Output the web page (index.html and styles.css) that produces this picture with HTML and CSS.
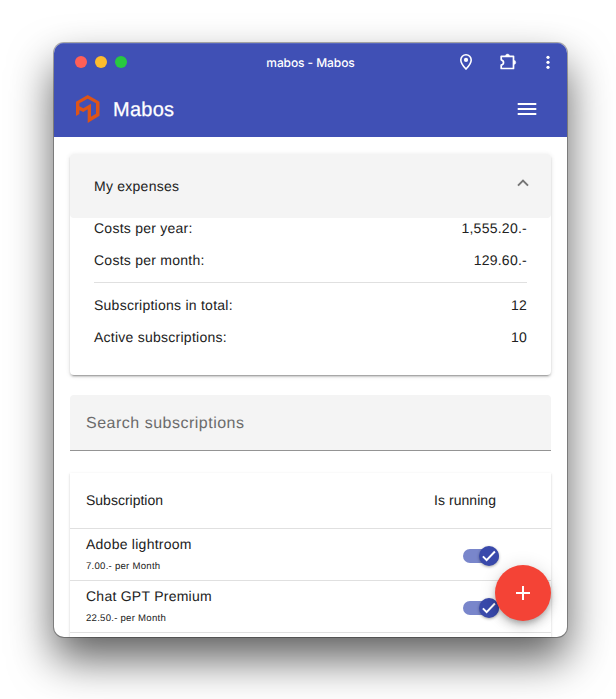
FILE: index.html
```html
<!DOCTYPE html>
<html lang="en">
<head>
<meta charset="utf-8">
<title>mabos - Mabos</title>
<link rel="stylesheet" href="styles.css">
</head>
<body>
<div class="window">
  <div class="titlebar">
    <div class="lights"><i class="light red"></i><i class="light yellow"></i><i class="light green"></i></div>
    <div class="window-title">mabos - Mabos</div>
    <div class="window-actions">
      <svg class="pin" width="18" height="20" viewBox="0 0 18 20"><path d="M9 2.700a5.200 5.200 0 0 0-5.200 5.200C3.800 11.500 9 17 9 17s5.200-5.500 5.200-9.100A5.200 5.200 0 0 0 9 2.700z" fill="none" stroke="#fff" stroke-width="1.600"/><circle cx="9" cy="7.900" r="2.100" fill="#fff"/></svg>
      <svg class="puzzle" width="20" height="20" viewBox="0 0 20 20"><path d="M3.200 4.300h12.300v12.200H3.200v-3.400c3.100-.7 3.100-4.600 0-5.300z" fill="none" stroke="#fff" stroke-width="1.700" stroke-linejoin="round"/><path d="M7.500 4a2 2 0 0 1 4 0zM15.700 8.300a2 2 0 0 1 0 4.200z" fill="#fff" stroke="#fff" stroke-width=".4"/></svg>
      <svg class="dots" width="6" height="20" viewBox="0 0 6 20" fill="#fff"><circle cx="3" cy="5.300" r="1.600"/><circle cx="3" cy="10.300" r="1.600"/><circle cx="3" cy="15.300" r="1.600"/></svg>
    </div>
  </div>
  <header class="toolbar">
    <svg class="logo" width="24" height="30" viewBox="0 0 24 30"><path fill="#dd5417" fill-rule="evenodd" d="M11.700 1 23.500 7.700V21.700L11.700 29V15.300L7.300 18 3.400 16.300V20L0 22V7.700zM3.400 9.300v3l3.900 2L15 9.700v13l5-3V9.300l-8.300-4.600z"/></svg>
    <h1>Mabos</h1>
    <svg class="menu" width="20" height="14" viewBox="0 0 20 14" fill="#fff"><path d="M.7 1h18.600v2H.7zM.7 6h18.600v2H.7zM.7 11h18.600v2H.7z"/></svg>
  </header>
  <main>
    <section class="panel">
      <div class="panel-head"><span>My expenses</span><svg width="12" height="8" viewBox="0 0 12 8"><path d="m1 6.600 5-5 5 5" fill="none" stroke="#757575" stroke-width="2"/></svg></div>
      <dl class="summary">
        <div><dt>Costs per year:</dt><dd>1,555.20.-</dd></div>
        <div><dt>Costs per month:</dt><dd>129.60.-</dd></div>
        <hr>
        <div><dt>Subscriptions in total:</dt><dd>12</dd></div>
        <div><dt>Active subscriptions:</dt><dd>10</dd></div>
      </dl>
    </section>
    <div class="search">Search subscriptions</div>
    <section class="table">
      <div class="row head"><span>Subscription</span><span class="running">Is running</span></div>
      <div class="row"><div class="name">Adobe lightroom<small>7.00.- per Month</small></div>
        <div class="switch"><span class="knob"><svg width="16" height="14" viewBox="0 0 16 14"><path d="m1.900 7.400 3.700 3.700 8.300-8.600" fill="none" stroke="#fff" stroke-width="2"/></svg></span></div></div>
      <div class="row"><div class="name">Chat GPT Premium<small>22.50.- per Month</small></div>
        <div class="switch"><span class="knob"><svg width="16" height="14" viewBox="0 0 16 14"><path d="m1.900 7.400 3.700 3.700 8.300-8.600" fill="none" stroke="#fff" stroke-width="2"/></svg></span></div></div>
      <div class="row"></div>
    </section>
  </main>
  <div class="fab"><svg width="16" height="16" viewBox="0 0 16 16"><path d="M8 1v14M1 8h14" stroke="#fff" stroke-width="2"/></svg></div>
</div>
</body>
</html>
```
FILE: styles.css
```css
* { box-sizing: border-box; }
body {
  margin: 0;
  width: 616px;
  height: 699px;
  padding: 43px 49px 0 54px;
  overflow: hidden;
  background: #fff;
  font-family: "Liberation Sans", Arial, sans-serif;
  font-size: 14px;
  letter-spacing: .25px;
  color: #212121;
  text-rendering: geometricPrecision;
}
svg { display: block; flex: none; }
.window {
  position: relative;
  width: 513px;
  height: 594px;
  overflow: hidden;
  border-radius: 10px;
  background: #fff;
  box-shadow: 0 0 0 1px rgba(0,0,0,.3), 0 22px 44px rgba(0,0,0,.63);
}
.titlebar {
  display: grid;
  grid-template-columns: 1fr auto 1fr;
  align-items: center;
  height: 38px;
  padding: 0 16px 0 21px;
  background: #4050b5;
  box-shadow: inset 0 1px #5867be;
  color: #fff;
}
.lights { display: flex; gap: 8px; }
.light { width: 12px; height: 12px; border-radius: 50%; }
.red { background: #ff5f57; }
.yellow { background: #febc2e; }
.green { background: #28c840; }
.window-title { margin-right: 5px; font: 500 12px Inter, sans-serif; letter-spacing: -.08px; }
.window-actions { display: flex; justify-content: flex-end; align-items: center; }
.puzzle { margin: 0 27px 0 23px; }
.toolbar {
  display: flex;
  align-items: center;
  height: 56px;
  padding: 0 30px 0 22px;
  background: #4050b5;
  color: #fff;
}
.toolbar h1 { flex: 1; margin: 2px 0 0 13px; font-size: 20px; font-weight: 400; -webkit-text-stroke: .25px #fff; }
main { padding: 17px 16px 0; }
.panel {
  height: 221px;
  border-radius: 4px;
  background: #fff;
  box-shadow: 0 3px 1px -2px rgba(0,0,0,.2), 0 2px 2px rgba(0,0,0,.14), 0 1px 5px rgba(0,0,0,.12);
}
.panel-head {
  display: flex;
  justify-content: space-between;
  align-items: center;
  height: 64px;
  padding: 0 22px 0 24px;
  border-radius: 4px;
  background: #f4f4f4;
}
.panel-head svg { margin-top: -7px; }
.summary { margin: -6px 24px 0; }
.summary div { display: flex; justify-content: space-between; align-items: center; height: 32px; }
.summary dd { margin: 0; }
.summary hr { height: 1px; margin: 6px 0; border: 0; background: #e0e0e0; }
.search {
  height: 56px;
  margin: 20px 0 22px;
  padding: 1px 16px 0;
  border-bottom: 1px solid #949494;
  border-radius: 4px 4px 0 0;
  background: #f4f4f4;
  color: #6b6b6b;
  font-size: 16px;
  line-height: 56px;
  letter-spacing: .5px;
}
.table { box-shadow: 0 2px 1px -1px rgba(0,0,0,.2), 0 1px 1px rgba(0,0,0,.14), 0 1px 3px rgba(0,0,0,.12); }
.row {
  display: flex;
  justify-content: space-between;
  align-items: center;
  height: 52px;
  padding: 0 52px 0 16px;
  border-bottom: 1px solid #e0e0e0;
}
.head { height: 56px; padding: 0 55px 2px 16px; letter-spacing: 0; }
.running { letter-spacing: .05px; }
.name { line-height: 20px; }
.name small { display: block; margin: 4px 0 -1px; font-size: 9.6px; line-height: 18px; }
.switch { display: flex; align-items: center; justify-content: flex-end; width: 36px; height: 14px; margin-top: 3px; border-radius: 7px; background: #7986cb; }
.knob {
  display: flex;
  align-items: center;
  justify-content: center;
  flex: none;
  width: 20px;
  height: 20px;
  border-radius: 50%;
  background: #3949ab;
  box-shadow: 0 1px 3px rgba(0,0,0,.35);
}
.fab {
  position: absolute;
  right: 16px;
  bottom: 16px;
  display: flex;
  align-items: center;
  justify-content: center;
  width: 56px;
  height: 56px;
  border-radius: 50%;
  background: #f44336;
  box-shadow: 0 3px 5px -1px rgba(0,0,0,.2), 0 6px 10px rgba(0,0,0,.14), 0 1px 18px rgba(0,0,0,.12);
}
```
